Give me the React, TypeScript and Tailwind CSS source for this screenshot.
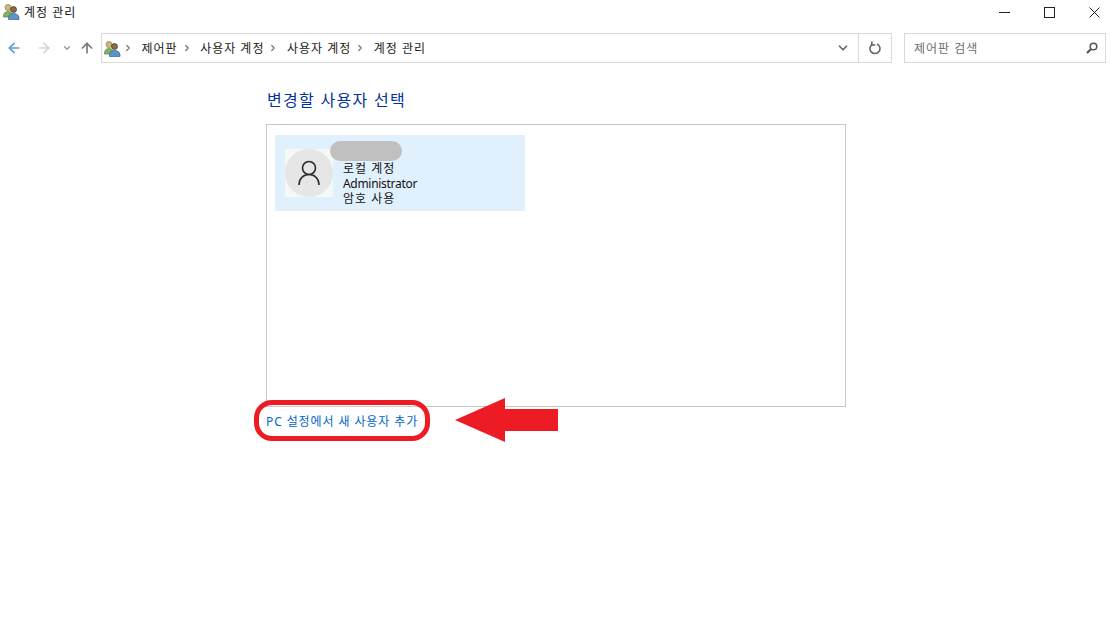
import { ArrowLeft, ArrowRight, ArrowUp, ChevronDown, ChevronRight } from "lucide-react";

const FONT = "font-['Noto_Sans','Noto_Sans_CJK_KR',sans-serif]";

const UsersIcon = ({ className }: { className?: string }) => (
    <svg className={className} width="17" height="17" viewBox="0 0 17 17">
        <circle cx="5" cy="4.500" r="3" fill="#d2b878" stroke="#8a7a4a" strokeWidth="0.7" />
        <path d="M0.500 13c0-3 2-4.500 4.500-4.500S9.500 10 9.500 13v1h-9z" fill="#86b060" stroke="#5d7f45" strokeWidth="0.7" />
        <circle cx="10.500" cy="6.500" r="3" fill="#8a6a48" stroke="#3e3020" strokeWidth="0.7" />
        <path d="M5.500 15c0-3 2-4.500 5-4.500s5.500 1.500 5.500 4.500v1.500H5.500z" fill="#5b94c8" stroke="#36658f" strokeWidth="0.7" />
    </svg>
);

const Crumb = ({ label }: { label: string }) => (
    <>
        <ChevronRight size={10} strokeWidth={3} className="ml-[4px] mr-[8.5px] shrink-0 text-[#777]" />
        <span className="pt-[2px]">{label}</span>
    </>
);

const AddressBar = () => (
    <div className="flex h-[30px] flex-1 items-center border border-[#d9d9d9] text-xs tracking-[1px] text-[#1a1a1a]">
        <div className="ml-[2px] flex flex-1 items-center">
            <UsersIcon className="-mr-[2px]" />
            <Crumb label="제어판" />
            <Crumb label="사용자 계정" />
            <Crumb label="사용자 계정" />
            <Crumb label="계정 관리" />
        </div>
        <div className="flex w-[23px] justify-start text-[#666]">
            <ChevronDown size={14} strokeWidth={3} className="ml-px" />
        </div>
        <div className="flex h-full w-[33px] items-center justify-center border-l border-[#d9d9d9]">
            <svg width="13" height="14" viewBox="0 0 13 14" fill="none" stroke="#666" strokeWidth="1.600">
                <path d="M3.500 3.200A5 5 0 1 0 8 3" />
                <path d="M2.800 0.500v3.500h3.500" />
            </svg>
        </div>
    </div>
);

const UserTile = () => (
    <div className="relative flex h-[76px] w-[250px] items-center bg-[#e1f0fd] pl-[10px]">
        <div className="flex h-12 w-12 items-center justify-center bg-[#f5f9f5]">
            <div className="flex h-12 w-12 items-center justify-center rounded-full bg-[#e6e6e6]">
                <svg width="24" height="28" viewBox="0 0 24 28" fill="none" stroke="#2b2b2b" strokeWidth="1.600">
                    <circle cx="12" cy="9" r="6.500" />
                    <path d="M2 26c0-6 4-10.500 10-10.500S22 20 22 26" />
                </svg>
            </div>
        </div>
        <div className="ml-[10px] mt-[20px] flex flex-col text-xs leading-[15px] text-[#111]">
            <span className="tracking-[1px]">로컬 계정</span>
            <span className="tracking-[-0.3px]">Administrator</span>
            <span className="tracking-[1px]">암호 사용</span>
        </div>
        {/* name is painted out in the screenshot */}
        <div className="absolute left-[55px] top-[6px] h-[20px] w-[72px] rounded-full bg-[#c0c0c0]" />
    </div>
);

export default function App() {
    return (
        <div className={`relative h-[625px] w-[1113px] overflow-hidden bg-white ${FONT}`}>
            {/* title bar */}
            <div className="flex h-[33px] items-start pl-[3px] pt-[3px]">
                <UsersIcon />
                <span className="ml-[4px] text-xs leading-[19px] tracking-[1px] text-[#111]">계정 관리</span>
                <div className="-mr-[4px] ml-auto flex text-[#222]">
                    <div className="flex h-[18px] w-[45px] items-center justify-center">
                        <div className="h-px w-[11px] bg-[#222]" />
                    </div>
                    <div className="flex h-[18px] w-[45px] items-center justify-center">
                        <div className="h-[11px] w-[11px] border border-[#222]" />
                    </div>
                    <div className="flex h-[18px] w-[45px] items-center justify-center">
                        <svg width="11" height="11" viewBox="0 0 11 11" stroke="#222" strokeWidth="1">
                            <path d="M0.500 0.500l10 10M10.500 0.500l-10 10" />
                        </svg>
                    </div>
                </div>
            </div>

            {/* nav row */}
            <div className="flex h-[30px] items-center pr-[7px]">
                <div className="flex w-[101px] items-center pl-[6px]">
                    <ArrowLeft size={16} strokeWidth={2.5} className="text-[#5b9bd5]" />
                    <ArrowRight size={16} strokeWidth={2.5} className="ml-[14px] text-[#d4d4d4]" />
                    <ChevronDown size={10} strokeWidth={3} className="ml-[10px] text-[#999]" />
                    <ArrowUp size={16} strokeWidth={2.5} className="ml-[7px] text-[#777]" />
                </div>
                <AddressBar />
                <div className="ml-[12px] flex h-[30px] w-[202px] items-center justify-between border border-[#d9d9d9] pl-[9px] pr-[7px] text-xs tracking-[1px] text-[#6d6d6d]">
                    <span className="pt-[2px]">제어판 검색</span>
                    <svg width="12" height="12" viewBox="0 0 12 12" fill="none" stroke="#555" strokeWidth="1.500">
                        <circle cx="7.500" cy="4.500" r="3.300" />
                        <path d="M5 7 1 11" strokeWidth="2.200" />
                    </svg>
                </div>
            </div>

            {/* content */}
            <div className="ml-[266px] flex w-[580px] flex-col">
                <h1 className="ml-px mt-[25px] text-[16px] leading-[24px] font-normal tracking-[1.3px] text-[#003399]">변경할 사용자 선택</h1>
                <div className="mt-[12px] h-[283px] border border-[#c8c8c8] pl-[8px] pt-[10px]">
                    <UserTile />
                </div>
                <a className="mt-[6px] text-xs leading-[17px] tracking-[0.9px] text-[#0066cc]">PC 설정에서 새 사용자 추가</a>
            </div>

            {/* red annotation */}
            <div className="absolute left-[254px] top-[400px] h-[41px] w-[176px] rounded-[18px] border-[5px] border-[#ed1c24]" />
            <svg className="absolute left-[455px] top-[398px]" width="103" height="44" viewBox="0 0 103 44">
                <path d="M0 22 50 0V11H103V33H50V44z" fill="#ed1c24" />
            </svg>
        </div>
    );
}
